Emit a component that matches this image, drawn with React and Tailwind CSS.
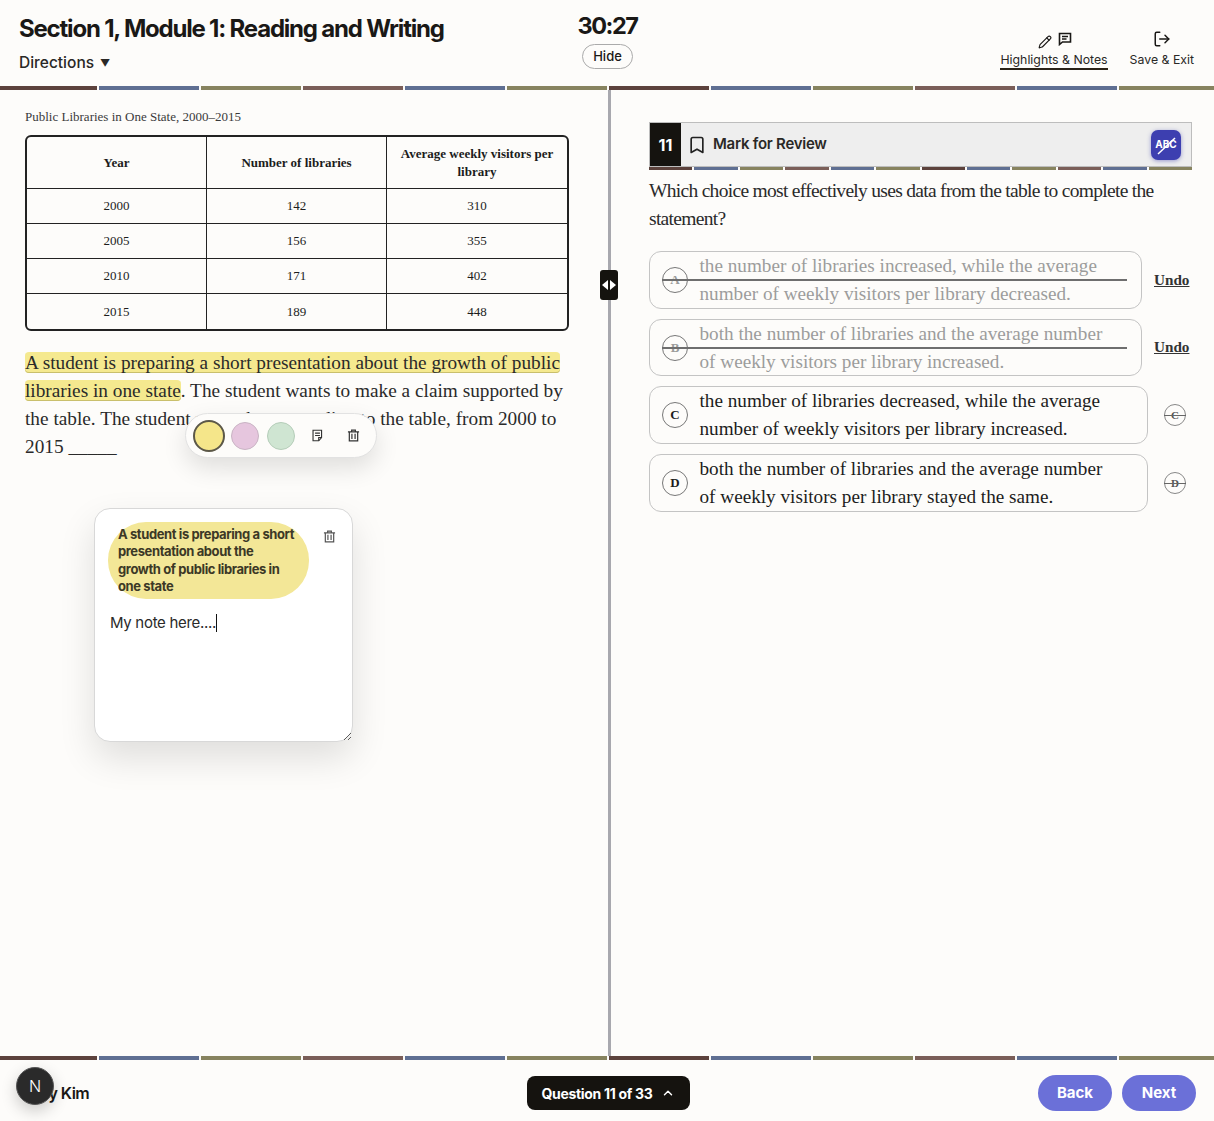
import React from 'react';
import { Bookmark, ChevronUp, LogOut, Pencil } from 'lucide-react';

const stripeColors = ['#5c423c', '#5f6f92', '#87835f', '#7a5e58', '#5f6f92', '#87835f'];

const Stripe = () => (
  <div className="flex h-1 w-full shrink-0 gap-[2px]">
    {Array.from({ length: 12 }).map((_, i) => (
      <div
        key={i}
        className={i === 0 ? 'w-[97px]' : i === 11 ? 'flex-1' : 'w-[100px]'}
        style={{ backgroundColor: stripeColors[i % 6] }}
      />
    ))}
  </div>
);

const NoteIcon = ({ className }) => (
  <svg viewBox="0 0 16 16" fill="none" stroke="currentColor" strokeWidth="1.4" className={className}>
    <path d="M2.5 1.5h10.5v9l-3.5 4h-7z" />
    <path d="M5 5h6M5 8h6M9.5 14.5v-4H13" />
  </svg>
);

const ChatIcon = ({ className }) => (
  <svg viewBox="0 0 14 14" fill="none" stroke="currentColor" strokeWidth="1.6" className={className}>
    <path d="M1.5 1.5h11v8.5H4.5l-3 2.5z" />
    <path d="M4 4.5h6M4 7h4.5" />
  </svg>
);

const TrashIcon = ({ className }) => (
  <svg viewBox="0 0 14 14" fill="none" stroke="currentColor" strokeWidth="1.3" className={className}>
    <path d="M1 3h12M5 3V1.3h4V3M2.5 3v9.7h9V3M5.3 5.2v5.5M8.7 5.2v5.5" />
  </svg>
);

const TableCell = ({ children, head, wide }) => (
  <td
    className={`border border-[#222] text-center align-middle text-[13px] text-[#1c1c1c] ${head ? 'font-bold leading-[18px]' : ''} ${wide || ''}`}
  >
    {children}
  </td>
);

const rows = [
  ['2000', '142', '310'],
  ['2005', '156', '355'],
  ['2010', '171', '402'],
  ['2015', '189', '448'],
];

const options = [
  { key: 'A', l1: 'the number of libraries increased, while the average', l2: 'number of weekly visitors per library decreased.', out: true, h: 'h-[58px]' },
  { key: 'B', l1: 'both the number of libraries and the average number', l2: 'of weekly visitors per library increased.', out: true, h: 'h-[57px]' },
  { key: 'C', l1: 'the number of libraries decreased, while the average', l2: 'number of weekly visitors per library increased.', h: 'h-[58px]' },
  { key: 'D', l1: 'both the number of libraries and the average number', l2: 'of weekly visitors per library stayed the same.', h: 'h-[58px]' },
];

const Option = ({ opt }) => (
  <div className="flex items-center">
    <div
      className={`relative flex items-center rounded-[12px] border border-[#c4c4c4] pl-[12px] ${opt.h} ${opt.out ? 'w-[493px] text-[#9c9c9c]' : 'w-[499px] text-[#1c1c1c]'}`}
    >
      <div className="flex h-[26px] w-[26px] shrink-0 items-center justify-center rounded-full border border-[#777] text-[13px] font-bold">
        {opt.key}
      </div>
      <div className="ml-[11.5px] whitespace-nowrap text-[19.2px] leading-[28px]">
        <div>{opt.l1}</div>
        <div>{opt.l2}</div>
      </div>
      {opt.out && <div className="absolute top-[27px] right-[14px] left-[12px] h-[2px] bg-[#6e6e6e]" />}
    </div>
    {opt.out ? (
      <div className="ml-[12px] text-[15.2px] font-bold text-[#333] underline">Undo</div>
    ) : (
      <div className="relative ml-[16px] flex h-[22px] w-[22px] items-center justify-center rounded-full border border-[#888] text-[11px] font-bold text-[#555]">
        {opt.key}
        <div className="absolute top-[10px] -right-[1px] -left-[1px] h-px bg-[#666]" />
      </div>
    )}
  </div>
);

export default function App() {
  return (
    <div className="relative flex h-[1121px] w-full flex-col overflow-hidden bg-[#fdfcfa] font-['Inter',sans-serif] text-[#1a1816]">
      <header className="grid h-[86px] shrink-0 grid-cols-[1fr_auto_1fr] px-[19px]">
        <div>
          <h1 className="mt-[14px] text-[24px] leading-[30px] font-bold tracking-[-1.2px] whitespace-nowrap">Section 1, Module 1: Reading and Writing</h1>
          <div className="mt-[7px] flex items-center gap-[6px] text-[15.5px] leading-[24px] font-medium text-[#2a2826]">
            Directions <span className="text-[10px]">▼</span>
          </div>
        </div>
        <div className="ml-px flex flex-col items-center">
          <div className="mt-[11px] text-[23.5px] leading-[30px] font-bold tracking-[-1.5px]">30:27</div>
          <div className="mt-[3px] flex h-[25px] w-[51px] items-center justify-center rounded-full border border-[#aaa] text-[13px] font-medium">Hide</div>
        </div>
        <div className="flex justify-end gap-[22px] pr-px">
          <div className="flex flex-col items-center">
            <div className="mt-[29px] flex h-[20px] items-center gap-[6px]">
              <Pencil size={14} strokeWidth={1.9} className="mt-[5px] ml-px" />
              <ChatIcon className="h-[14px] w-[14px]" />
            </div>
            <div className="mt-[3px] border-b-2 border-[#2a2218] text-[12.3px] leading-[16px] text-[#2a2826]">Highlights &amp; Notes</div>
          </div>
          <div className="flex flex-col items-center">
            <div className="mt-[29px] flex h-[20px] items-center">
              <LogOut size={18} strokeWidth={2} />
            </div>
            <div className="mt-[3px] text-[12.3px] leading-[16px] text-[#2a2826]">Save &amp; Exit</div>
          </div>
        </div>
      </header>
      <Stripe />

      <main className="flex min-h-0 flex-1 font-['Liberation_Serif',serif]">
        <section className="w-[608px] shrink-0 px-[25px] pt-[19px]">
          <div className="text-[13px] leading-[16px] text-[#3a3a3a]">Public Libraries in One State, 2000–2015</div>
          <div className="mt-[10px] w-[544px] overflow-hidden rounded-[6px] border-2 border-[#222]">
            <table className="-m-px w-[544px] border-collapse">
              <tbody>
                <tr className="h-[52px]">
                  <TableCell head wide="w-[180px]">Year</TableCell>
                  <TableCell head wide="w-[180px]">Number of libraries</TableCell>
                  <TableCell head wide="pr-[2px]">Average weekly visitors per<br />library</TableCell>
                </tr>
                {rows.map((r, n) => (
                  <tr key={r[0]} className={n < 3 ? 'h-[35px]' : 'h-[36px]'}>
                    {r.map((c, i) => (
                      <TableCell key={c} wide={i === 2 ? 'pr-[2px]' : ''}>{c}</TableCell>
                    ))}
                  </tr>
                ))}
              </tbody>
            </table>
          </div>
          <p className="mt-[18px] w-[545px] text-[19.3px] leading-[28px] text-[#2a2a2a]">
            <span className="rounded-[4px] bg-[#f5e98f] shadow-[inset_0_-1px_0_#c9bf6c] [box-decoration-break:clone]">
              A student is preparing a short presentation about the growth of public libraries in one state
            </span>
            . The student wants to make a claim supported by the table. The student notes that, according to the table, from 2000 to 2015 _____
          </p>
        </section>

        <div className="w-[3px] shrink-0 bg-[#a8a8ae]" />

        <section className="min-w-0 flex-1 pt-[32px] pr-[22px] pl-[38px]">
          <div className="flex h-[45px] items-center border border-[#bdbdbd] bg-[#eeeeee]">
            <div className="flex h-full w-[31px] items-center justify-center bg-[#15130f] text-[16px] font-['Inter',sans-serif] font-bold text-white">11</div>
            <Bookmark size={20} strokeWidth={2} className="ml-[6px] text-[#222]" />
            <div className="ml-[6px] font-['Inter',sans-serif] text-[15px] font-semibold tracking-[-0.25px] text-[#2a2826]">Mark for Review</div>
            <div className="relative mr-[10px] ml-auto flex h-[30px] w-[30px] items-center justify-center rounded-[7px] bg-[#3d3fb0] font-['Inter',sans-serif] text-[10px] font-bold text-white shadow-[0_1px_4px_rgba(61,63,176,0.5)]">
              ABC
              <svg viewBox="0 0 30 30" className="absolute inset-0 h-full w-full" stroke="#fff" strokeWidth="1.5">
                <path d="M7 24 24 8" />
              </svg>
            </div>
          </div>
          <div className="mb-[7px] flex h-[3px] gap-[2px]">
            {Array.from({ length: 12 }).map((_, i) => (
              <div key={i} className="flex-1" style={{ backgroundColor: stripeColors[i % 6] }} />
            ))}
          </div>
          <p className="w-[520px] text-[19.5px] leading-[28px] tracking-[-0.7px] text-[#2a2a2a]">
            Which choice most effectively uses data from the table to complete the statement?
          </p>
          <div className="mt-[18px] flex flex-col gap-[10px]">
            {options.map((opt) => (
              <Option key={opt.key} opt={opt} />
            ))}
          </div>
        </section>
      </main>

      <Stripe />
      <footer className="grid h-[61px] shrink-0 grid-cols-[1fr_auto_1fr] items-center pt-[5px] pr-[18px] pl-[19px]">
        <div className="ml-[5px] text-[16px] font-semibold tracking-[-0.6px]">Amy Kim</div>
        <div className="ml-px flex h-[34px] w-[163px] items-center justify-center gap-[8px] rounded-[8px] bg-[#15130f] text-[14px] font-bold tracking-[-0.3px] text-white">
          Question 11 of 33
          <ChevronUp size={14} strokeWidth={2.5} />
        </div>
        <div className="flex justify-end gap-[10px]">
          <div className="flex h-[36px] w-[74px] items-center justify-center rounded-full bg-[#6b70d8] text-[15px] font-bold text-white">Back</div>
          <div className="flex h-[36px] w-[74px] items-center justify-center rounded-full bg-[#6b70d8] text-[15px] font-bold text-white">Next</div>
        </div>
      </footer>

      {/* divider handle */}
      <div className="absolute top-[270px] left-[600px] flex h-[30px] w-[18px] items-center justify-center gap-[2px] rounded-[3px] bg-[#15130f]">
        <div className="h-0 w-0 border-y-[5px] border-r-[6px] border-y-transparent border-r-white" />
        <div className="h-0 w-0 border-y-[5px] border-l-[6px] border-y-transparent border-l-white" />
      </div>

      {/* highlight toolbar */}
      <div className="absolute top-[413px] left-[185px] flex h-[45px] w-[192px] items-center rounded-full border border-[#e2e2e2] bg-[#fdfcfa] pl-[7px] shadow-[0_10px_24px_rgba(0,0,0,0.12)]">
        <div className="h-[32px] w-[32px] rounded-full border-[2px] border-[#5c5848] bg-[#f5e68a]" />
        <div className="ml-[6px] h-[28px] w-[28px] rounded-full border border-[#c9b4c4] bg-[#e6c6de]" />
        <div className="ml-[8px] h-[28px] w-[28px] rounded-full border border-[#b5cdb9] bg-[#cfe5d2]" />
        <NoteIcon className="ml-[16px] h-[13px] w-[13px] text-[#333]" />
        <TrashIcon className="ml-[23px] h-[13px] w-[13px] text-[#333]" />
      </div>

      {/* note card */}
      <div className="absolute top-[508px] left-[94px] h-[234px] w-[259px] resize overflow-auto rounded-[16px] border border-[#d8d8d8] bg-white shadow-[0_16px_36px_rgba(0,0,0,0.12)]">
        <div className="mt-[13px] ml-[13px] flex h-[77px] w-[201px] items-center rounded-[38px] bg-[#f3e797] pl-[10px] text-[13px] leading-[17.3px] font-bold tracking-[-0.4px] text-[#3c3826]">
          <div className="w-[178px]">A student is preparing a short presentation about the growth of public libraries in one state</div>
        </div>
        <TrashIcon className="absolute top-[21px] right-[16px] h-[13px] w-[13px] text-[#555]" />
        <div className="mt-[13px] ml-[15px] flex items-center text-[15px] leading-[22px] tracking-[-0.3px] text-[#2a2a2a]">
          My note here....
          <span className="h-[18px] w-px bg-[#111]" />
        </div>
      </div>

      {/* dev indicator */}
      <div className="absolute top-[1067px] left-[16px] flex h-[38px] w-[38px] items-center justify-center rounded-full border border-[#555] bg-[#2a2a2a] text-[16px] font-light text-white shadow-[0_6px_16px_rgba(0,0,0,0.2)]">
        N
      </div>
    </div>
  );
}
